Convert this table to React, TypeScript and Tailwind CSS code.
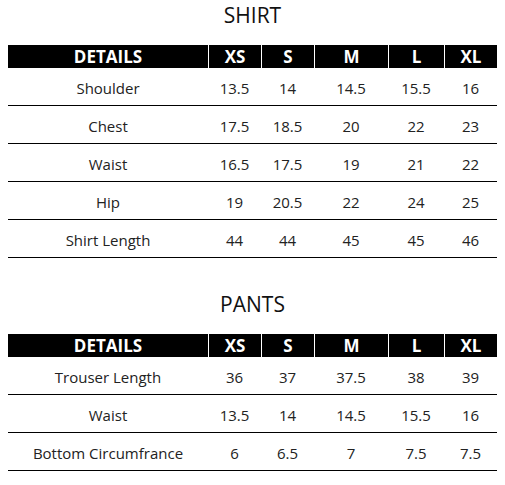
import React from "react";

const cols = "grid-cols-[200px_53px_53px_74px_56px_53px]";

type Row = [string, string, string, string, string, string];

const shirt: Row[] = [
  ["Shoulder", "13.5", "14", "14.5", "15.5", "16"],
  ["Chest", "17.5", "18.5", "20", "22", "23"],
  ["Waist", "16.5", "17.5", "19", "21", "22"],
  ["Hip", "19", "20.5", "22", "24", "25"],
  ["Shirt Length", "44", "44", "45", "45", "46"],
];

const pants: Row[] = [
  ["Trouser Length", "36", "37", "37.5", "38", "39"],
  ["Waist", "13.5", "14", "14.5", "15.5", "16"],
  ["Bottom Circumfrance", "6", "6.5", "7", "7.5", "7.5"],
];

const heads = ["DETAILS", "XS", "S", "M", "L", "XL"];

function SizeTable({ title, rows }: { title: string; rows: Row[] }) {
  return (
    <section>
      <h2 className="h-[31px] leading-[31px] text-center text-[21px] text-[#111] mb-[14px]">{title}</h2>
      <div className={`grid ${cols} h-[23px] bg-black text-white font-bold text-[17px] leading-[24px]`}>
        {heads.map((h, i) => (
          <div key={h} className={`text-center ${i > 0 ? "border-l border-white" : ""}`}>
            {h}
          </div>
        ))}
      </div>
      {rows.map((r) => (
        <div key={r[0]} className={`grid ${cols} h-[38px] pt-[3px] border-b border-black items-center text-[15px] text-[#222]`}>
          {r.map((c, i) => (
            <div key={i} className="text-center">
              {c}
            </div>
          ))}
        </div>
      ))}
    </section>
  );
}

export default function App() {
  return (
    <div className="w-[505px] h-[485px] bg-white px-2 font-['Open_Sans',sans-serif]">
      <SizeTable title="SHIRT" rows={shirt} />
      <div className="h-[31px]" />
      <SizeTable title="PANTS" rows={pants} />
    </div>
  );
}
